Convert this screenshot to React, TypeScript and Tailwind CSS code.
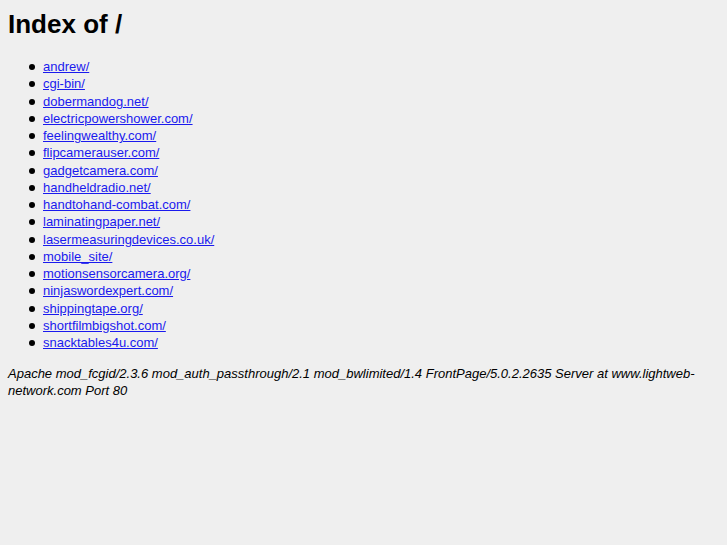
const dirs = [
  "andrew/",
  "cgi-bin/",
  "dobermandog.net/",
  "electricpowershower.com/",
  "feelingwealthy.com/",
  "flipcamerauser.com/",
  "gadgetcamera.com/",
  "handheldradio.net/",
  "handtohand-combat.com/",
  "laminatingpaper.net/",
  "lasermeasuringdevices.co.uk/",
  "mobile_site/",
  "motionsensorcamera.org/",
  "ninjaswordexpert.com/",
  "shippingtape.org/",
  "shortfilmbigshot.com/",
  "snacktables4u.com/",
];

export default function App() {
  return (
    <div className="min-h-[545px] bg-[#efefef] px-2 pt-[9px] font-['Liberation_Sans',Arial,sans-serif] text-[13px] text-black">
      <h1 className="text-[26px] font-bold leading-[30px]">Index of /</h1>
      <ul className="mt-[19px] pl-[35px] leading-[17.25px]">
        {dirs.map((d) => (
          <li key={d} className="relative">
            <span className="absolute left-[-14px] top-[6px] h-[6px] w-[6px] rounded-full bg-black" />
            <a href="#" className="text-[#1a1aee] underline">
              {d}
            </a>
          </li>
        ))}
      </ul>
      <address className="mt-[14px] leading-[17px] italic">
        Apache mod_fcgid/2.3.6 mod_auth_passthrough/2.1 mod_bwlimited/1.4 FrontPage/5.0.2.2635 Server at www.lightweb-network.com Port 80
      </address>
    </div>
  );
}
